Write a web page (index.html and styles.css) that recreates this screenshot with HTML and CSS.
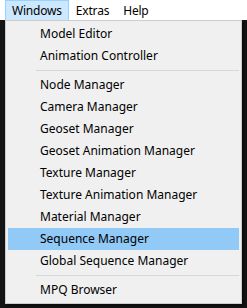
FILE: index.html
```html
<!DOCTYPE html>
<html lang="en">
<head>
  <meta charset="UTF-8">
  <title>Windows menu</title>
  <link rel="stylesheet" href="styles.css">
</head>
<body>
  <div class="menubar">
    <span class="menu-title open">Windows</span>
    <span class="menu-title">Extras</span>
    <span class="menu-title">Help</span>
  </div>

  <div class="scene">
    <ul class="dropdown">
      <li>Model Editor</li>
      <li>Animation Controller</li>
      <li class="sep"></li>
      <li>Node Manager</li>
      <li>Camera Manager</li>
      <li>Geoset Manager</li>
      <li>Geoset Animation Manager</li>
      <li>Texture Manager</li>
      <li>Texture Animation Manager</li>
      <li>Material Manager</li>
      <li class="hover">Sequence Manager</li>
      <li>Global Sequence Manager</li>
      <li class="sep"></li>
      <li>MPQ Browser</li>
    </ul>
  </div>
</body>
</html>
```

FILE: styles.css
```css
body {
  margin: 0;
  font-family: "Noto Sans", "Open Sans", sans-serif;
  font-size: 12px;
  color: #000;
  background: #111;
}

.menubar {
  display: flex;
  height: 20px;
  padding-left: 5px;
  background: #fff;
}

.menu-title {
  display: flex;
  align-items: center;
  padding: 0 6px;
  border: 1px solid transparent;
  border-bottom: none;
  letter-spacing: -0.2px;
}
.menu-title.open {
  background: #cce8ff;
  border-color: #99d1ff;
}

.scene {
  height: 288px;
  padding-left: 5px;
  background: #141414;
}

.dropdown {
  list-style: none;
  margin: 0;
  width: 231px;
  padding: 2px;
  background: #f0f0f0;
  border: 1px solid #cccccc;
  box-shadow: 2px 2px 2px rgba(0,0,0,0.5);
}

.dropdown li {
  height: 22px;
  line-height: 22px;
  padding-left: 32px;
}
.dropdown li.hover {
  background: #91c9f7;
}
.dropdown li.sep {
  height: 1px;
  margin: 3px 0 3px 28px;
  padding: 0;
  background: #d7d7d7;
}
```
